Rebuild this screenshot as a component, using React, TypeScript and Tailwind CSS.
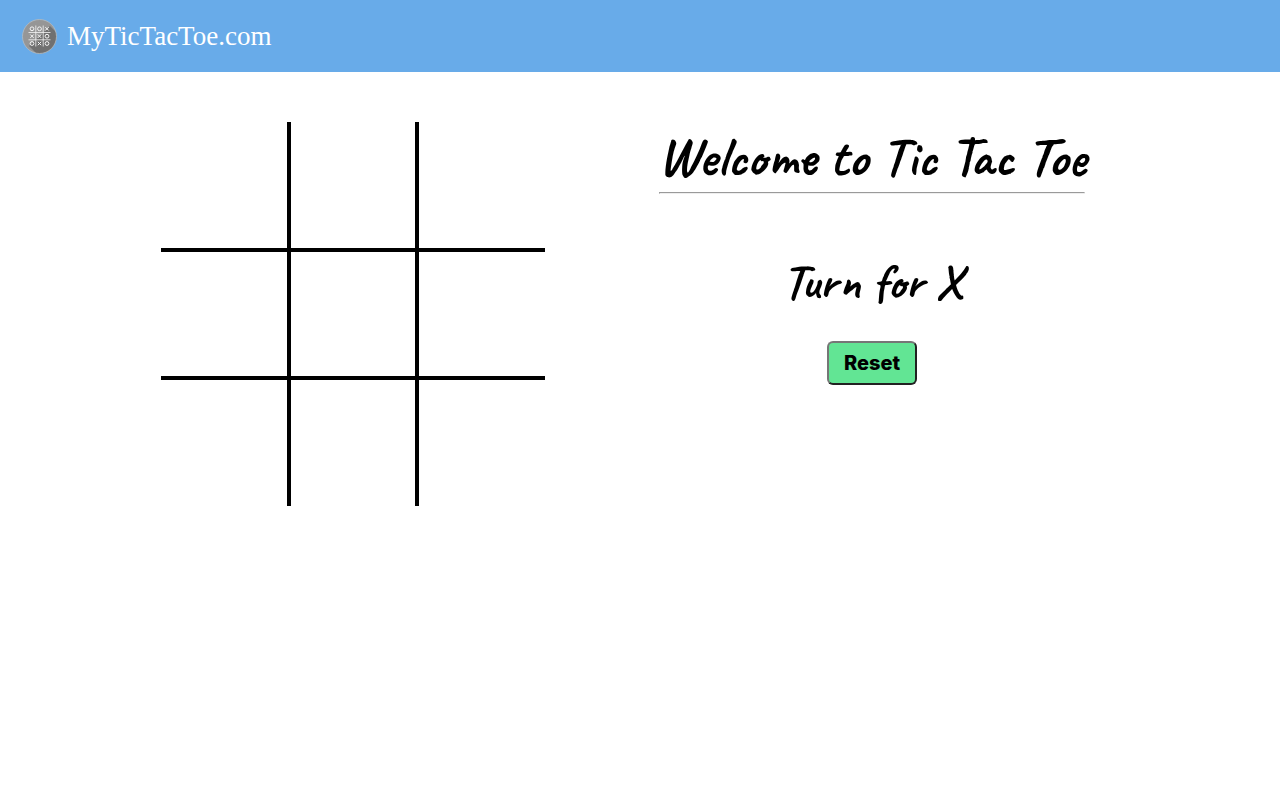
import { useState } from "react";

const LINES = [
  [0, 1, 2], [3, 4, 5], [6, 7, 8],
  [0, 3, 6], [1, 4, 7], [2, 5, 8],
  [0, 4, 8], [2, 4, 6],
];

const CELL_BORDERS = [
  "border-r-2 border-b-2",
  "border-x-2 border-b-2",
  "border-l-2 border-b-2",
  "border-r-2 border-y-2",
  "border-x-2 border-y-2",
  "border-l-2 border-y-2",
  "border-r-2 border-t-2",
  "border-x-2 border-t-2",
  "border-l-2 border-t-2",
];

function Logo() {
  return (
    <svg viewBox="0 0 36 36" className="size-9 shrink-0" aria-hidden="true">
      <defs>
        <clipPath id="disc">
          <circle cx="17.5" cy="18.5" r="17" />
        </clipPath>
      </defs>
      <circle cx="17.5" cy="18.5" r="17" fill="#969696" />
      <path d="M28 8 L40 20 V40 H19 L7 28 Z" fill="#707070" clipPath="url(#disc)" />
      <circle cx="17.5" cy="18.5" r="17" fill="none" stroke="#b4bcc3" strokeWidth="0.8" />
      <g fill="none" stroke="#f4f4f4">
        <path d="M13.8 7.5V28.5M21.2 7.5V28.5M6.500 14.500H28.500M6.500 21.800H28.500" strokeWidth="0.8" />
        <g strokeWidth="1">
          <circle cx="10" cy="10.8" r="1.9" />
          <circle cx="17.5" cy="10.8" r="1.9" />
          <circle cx="25" cy="18.2" r="1.9" />
          <circle cx="10" cy="25.5" r="1.9" />
          <circle cx="25" cy="25.5" r="1.9" />
          <path d="M23.3 9.1l3.4 3.4m0-3.4l-3.4 3.4M8.3 16.5l3.4 3.4m0-3.4l-3.4 3.4M15.8 16.5l3.4 3.4m0-3.4l-3.4 3.4M15.8 23.8l3.4 3.4m0-3.4l-3.4 3.4" />
        </g>
      </g>
    </svg>
  );
}

export default function App() {
  const [cells, setCells] = useState<string[]>(Array(9).fill(""));
  const turn = cells.filter(Boolean).length % 2 === 0 ? "X" : "O";
  const won = LINES.find(([a, b, c]) => cells[a] && cells[a] === cells[b] && cells[a] === cells[c]);

  const play = (index: number) => {
    if (cells[index] || won) return;
    setCells(cells.map((cell, i) => (i === index ? turn : cell)));
  };

  return (
    <div className="min-h-screen bg-white text-black">
      <header className="flex h-[72px] items-center bg-[#68abe9] px-[22px]">
        <a
          href="#"
          className="flex items-center gap-[9px] font-['Liberation_Serif',serif] text-[27px] leading-9 text-white"
        >
          <Logo />
          MyTicTacToe.com
        </a>
      </header>
      <main className="flex flex-wrap items-start justify-center gap-x-[114px] gap-y-10 pt-[50px] pr-[34px]">
        <div className="grid grid-cols-3">
          {cells.map((cell, i) => (
            <button
              key={i}
              type="button"
              aria-label={`Cell ${i + 1}`}
              onClick={() => play(i)}
              className={`size-32 cursor-pointer border-black font-['Caveat',cursive] text-6xl font-bold ${CELL_BORDERS[i]}`}
            >
              {cell}
            </button>
          ))}
        </div>
        <section className="flex w-[426px] flex-col items-center font-['Caveat',cursive] font-bold whitespace-nowrap">
          <h1 className="text-[55px] leading-[70px]">Welcome to Tic Tac Toe</h1>
          <hr className="h-[2px] w-full border border-t-[#9a9a9a] border-r-[#eeeeee] border-b-[#eeeeee] border-l-[#9a9a9a]" />
          <p className="pt-[57px] text-[50px] leading-[62px]">
            {won ? `${cells[won[0]]} Won` : `Turn for ${turn}`}
          </p>
          <button
            type="button"
            onClick={() => setCells(Array(9).fill(""))}
            className="mt-7 h-11 w-[90px] cursor-pointer rounded-md border-2 border-t-[#767676] border-r-[#212121] border-b-[#212121] border-l-[#767676] bg-[#62e594] font-['Inter',sans-serif] text-xl font-extrabold"
          >
            Reset
          </button>
        </section>
      </main>
    </div>
  );
}
